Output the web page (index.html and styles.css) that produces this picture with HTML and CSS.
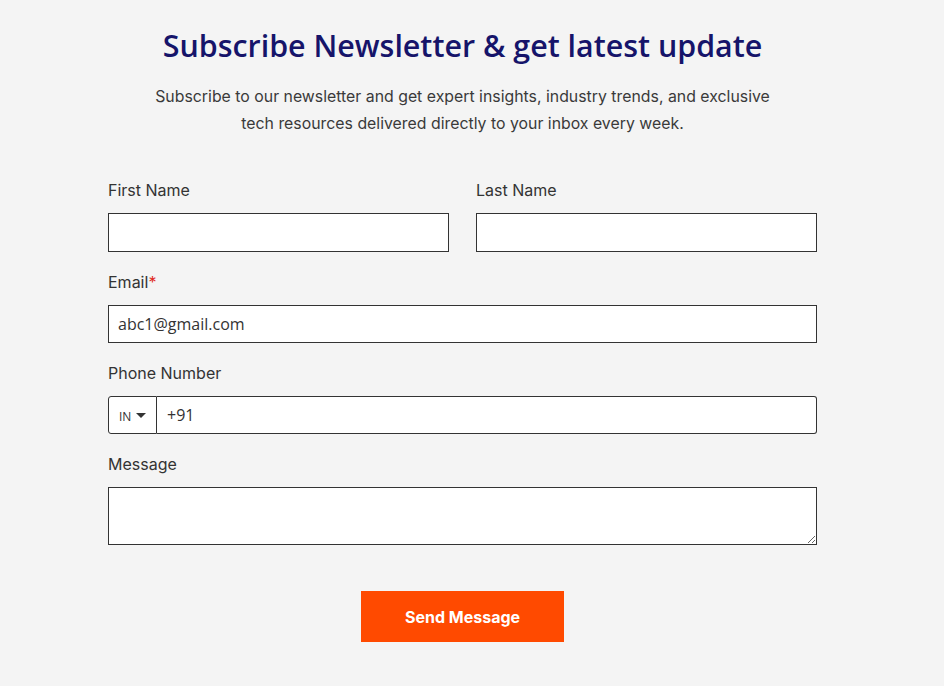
FILE: index.html
```html
<!DOCTYPE html>
<html lang="en">
<head>
<meta charset="utf-8">
<title>Subscribe Newsletter</title>
<link rel="stylesheet" href="styles.css">
</head>
<body>
<main class="wrap">
  <h1 class="title">Subscribe Newsletter &amp; get latest update</h1>
  <p class="lead">Subscribe to our newsletter and get expert insights, industry trends, and exclusive tech resources delivered directly to your inbox every week.</p>
  <form class="form">
    <div class="row two">
      <div class="field">
        <label class="label">First Name</label>
        <input class="input" type="text">
      </div>
      <div class="field">
        <label class="label">Last Name</label>
        <input class="input" type="text">
      </div>
    </div>
    <div class="field">
      <label class="label">Email<span class="req">*</span></label>
      <input class="input" type="text" value="abc1@gmail.com">
    </div>
    <div class="field">
      <label class="label">Phone Number</label>
      <div class="phone">
        <div class="country"><span class="cc">IN</span><span class="caret"></span></div>
        <input class="input phone-input" type="text" value="+91">
      </div>
    </div>
    <div class="field">
      <label class="label">Message</label>
      <textarea class="input textarea"></textarea>
    </div>
    <div class="actions">
      <button class="btn" type="button">Send Message</button>
    </div>
  </form>
</main>
</body>
</html>
```
FILE: styles.css
```css
* { box-sizing: border-box; }
html, body { margin: 0; padding: 0; }
body {
  background: #f4f4f4;
  font-family: Inter, "Liberation Sans", sans-serif;
  color: #333;
  width: 944px;
  height: 686px;
  overflow: hidden;
}
.wrap {
  width: 709px;
  margin-left: 108px;
  padding-top: 26px;
}
.title {
  margin: 0;
  font-family: "Open Sans", sans-serif;
  font-weight: 600;
  font-size: 30.4px;
  line-height: 40px;
  color: #16146a;
  text-align: center;
}
.lead {
  margin: 17px auto 0;
  width: 630px;
  font-size: 15.85px;
  line-height: 27px;
  text-align: center;
  color: #3a3a3a;
}
.form {
  margin-top: 41px;
  display: flex;
  flex-direction: column;
  gap: 18px;
}
.row.two {
  display: grid;
  grid-template-columns: 341px 341px;
  column-gap: 27px;
}
.field {
  display: flex;
  flex-direction: column;
}
.label {
  font-size: 16px;
  line-height: 24px;
  color: #333;
  margin-bottom: 11px;
}
.req { color: #e0291c; }
.input {
  display: block;
  width: 100%;
  height: 38px;
  border: 1px solid #333;
  border-radius: 0;
  background: #fff;
  font-family: "Open Sans", sans-serif;
  font-size: 16px;
  color: #333;
  padding: 0 9px;
  outline: none;
  margin: 0;
}
.row.two .input { height: 39px; }
.phone {
  display: flex;
  height: 38px;
}
.country {
  width: 49px;
  flex: none;
  border: 1px solid #333;
  border-radius: 3px 0 0 3px;
  background: #fff;
  display: flex;
  align-items: center;
  padding-left: 10px;
  gap: 5px;
}
.cc {
  font-family: "Open Sans", sans-serif;
  font-size: 12px;
  color: #333;
  padding-top: 2px;
}
.caret {
  width: 0;
  height: 0;
  border-left: 5px solid transparent;
  border-right: 5px solid transparent;
  border-top: 5px solid #333;
}
.phone-input {
  flex: 1;
  height: 38px;
  border-left: none;
  border-radius: 0 3px 3px 0;
  padding-left: 10px;
}
.textarea {
  height: 58px;
  resize: vertical;
  padding: 8px 9px;
}
.actions {
  display: flex;
  justify-content: center;
  margin-top: 28px;
}
.btn {
  width: 203px;
  height: 51px;
  border: none;
  background: #ff4a00;
  color: #fff;
  font-family: Inter, "Liberation Sans", sans-serif;
  font-weight: 700;
  font-size: 16px;
  cursor: pointer;
}
```
